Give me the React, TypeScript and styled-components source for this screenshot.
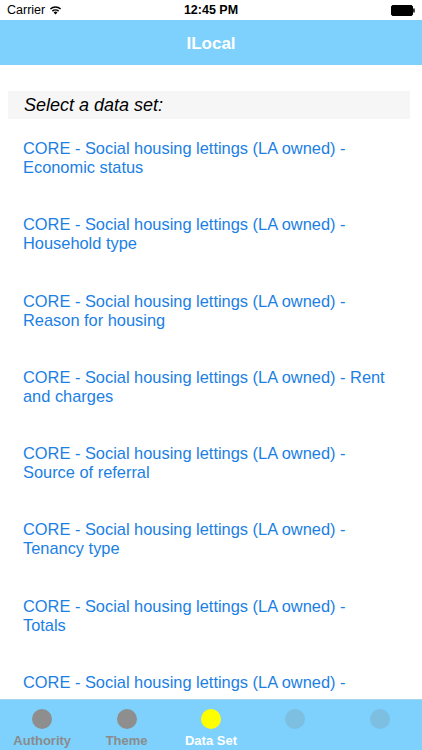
import React from "react";
import styled, { createGlobalStyle } from "styled-components";

const GlobalStyle = createGlobalStyle`
  html, body {
    margin: 0;
    padding: 0;
    background: #ffffff;
    font-family: "Liberation Sans", Arial, sans-serif;
  }
`;

const Screen = styled.div`
  width: 422px;
  height: 750px;
  display: flex;
  flex-direction: column;
  overflow: hidden;
  background: #fff;
`;

const StatusBar = styled.div`
  height: 20px;
  display: grid;
  grid-template-columns: 1fr auto 1fr;
  align-items: center;
  padding: 0 7px;
  font-size: 12.5px;
  color: #000;
`;

const StatusLeft = styled.div`
  display: flex;
  align-items: center;
  gap: 4px;
`;

const Time = styled.div`
  font-weight: 700;
  font-size: 12.5px;
`;

const StatusRight = styled.div`
  display: flex;
  justify-content: flex-end;
  align-items: center;
`;

const NavBar = styled.div`
  height: 45px;
  background: #7dd1fc;
  display: flex;
  align-items: center;
  justify-content: center;
  padding-top: 2px;
  box-sizing: border-box;
  color: #fff;
  font-weight: 700;
  font-size: 17px;
`;

const Content = styled.div`
  flex: 1;
  overflow: hidden;
  padding: 26px 12px 0 8px;
`;

const SectionHeader = styled.div`
  height: 28px;
  background: #f6f6f6;
  display: flex;
  align-items: center;
  padding-left: 16px;
  font-style: italic;
  font-size: 18px;
  color: #000;
`;

const List = styled.div`
  display: flex;
  flex-direction: column;
  padding: 20px 0 0 15px;
`;

const Item = styled.div`
  height: 76.3px;
  font-size: 16.4px;
  line-height: 19px;
  color: #1b80e4;
  flex-shrink: 0;
`;

const TabBar = styled.div`
  height: 51px;
  background: #7dd1fc;
  border-top: 1px solid #a6d3ec;
  display: grid;
  grid-template-columns: repeat(5, 1fr);
  box-sizing: border-box;
`;

const Tab = styled.div`
  display: flex;
  flex-direction: column;
  align-items: center;
  padding-top: 9px;
`;

const Dot = styled.div<{ $color: string }>`
  width: 20px;
  height: 20px;
  border-radius: 50%;
  background: ${(p) => p.$color};
`;

const TabLabel = styled.div<{ $active?: boolean }>`
  margin-top: 4px;
  font-size: 13px;
  font-weight: 700;
  color: ${(p) => (p.$active ? "#ffffff" : "#8b8b8b")};
  height: 16px;
`;

const items = [
  ["CORE - Social housing lettings (LA owned) -", "Economic status"],
  ["CORE - Social housing lettings (LA owned) -", "Household type"],
  ["CORE - Social housing lettings (LA owned) -", "Reason for housing"],
  ["CORE - Social housing lettings (LA owned) - Rent", "and charges"],
  ["CORE - Social housing lettings (LA owned) -", "Source of referral"],
  ["CORE - Social housing lettings (LA owned) -", "Tenancy type"],
  ["CORE - Social housing lettings (LA owned) -", "Totals"],
  ["CORE - Social housing lettings (LA owned) -"],
];

const tabs = [
  { label: "Authority", color: "#8e8e8e" },
  { label: "Theme", color: "#8e8e8e" },
  { label: "Data Set", color: "#ffff00", active: true },
  { label: "", color: "#7cbfe1" },
  { label: "", color: "#7cbfe1" },
];

const Wifi = () => (
  <svg width="13" height="10" viewBox="0 0 13 10">
    <path d="M6.5 9.5 L4.6 7.4 A2.8 2.8 0 0 1 8.4 7.4 Z" fill="#000" />
    <path d="M2.9 5.6 A5.2 5.2 0 0 1 10.1 5.6 L9.1 6.7 A3.8 3.8 0 0 0 3.9 6.7 Z" fill="#000" />
    <path d="M0.9 3.5 A8 8 0 0 1 12.1 3.5 L11.1 4.6 A6.6 6.6 0 0 0 1.9 4.6 Z" fill="#000" />
  </svg>
);

const Battery = () => (
  <svg width="24" height="11" viewBox="0 0 24 11">
    <rect x="0.5" y="0.5" width="21" height="10" rx="1.5" fill="#000" stroke="#000" />
    <rect x="22.2" y="3.5" width="1.5" height="4" fill="#000" />
  </svg>
);

export default function App() {
  return (
    <Screen>
      <GlobalStyle />
      <StatusBar>
        <StatusLeft>
          <span>Carrier</span>
          <Wifi />
        </StatusLeft>
        <Time>12:45 PM</Time>
        <StatusRight>
          <Battery />
        </StatusRight>
      </StatusBar>
      <NavBar>ILocal</NavBar>
      <Content>
        <SectionHeader>Select a data set:</SectionHeader>
        <List>
          {items.map((it, i) => (
            <Item key={i}>
              {it[0]}
              {it[1] && (
                <>
                  <br />
                  {it[1]}
                </>
              )}
            </Item>
          ))}
        </List>
      </Content>
      <TabBar>
        {tabs.map((t, i) => (
          <Tab key={i}>
            <Dot $color={t.color} />
            <TabLabel $active={t.active}>{t.label}</TabLabel>
          </Tab>
        ))}
      </TabBar>
    </Screen>
  );
}
